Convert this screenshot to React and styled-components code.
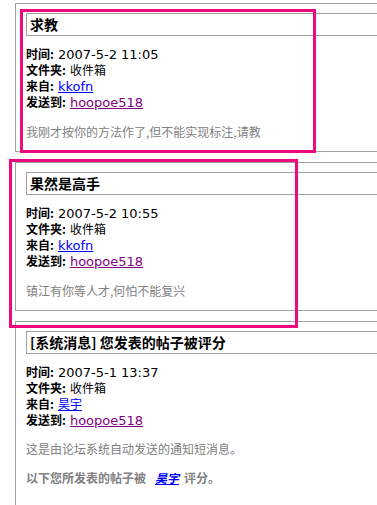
import React from 'react'
import styled, { createGlobalStyle } from 'styled-components'

const GlobalStyle = createGlobalStyle`
    html, body {
        margin: 0;
        padding: 0;
        background: #fff;
        overflow: hidden;
    }
    body {
        font-family: "DejaVu Sans", "Noto Sans CJK SC", sans-serif;
        font-size: 13px;
        color: #000;
    }
`

const Page = styled.div`
    position: relative;
    width: 377px;
    height: 505px;
    overflow: hidden;
    padding: 3px 0 0 15px;
    box-sizing: border-box;
`

const MessageBox = styled.div`
    width: 520px;
    border: 1px solid #a0a0a0;
    padding: 9px 10px ${p => p.bottom || 11}px 10px;
    margin-bottom: 10px;
`

const Title = styled.div`
    height: 21px;
    line-height: 21px;
    border: 1px solid #a0a0a0;
    padding-left: 3px;
    font-family: "Noto Sans CJK SC", "DejaVu Sans", sans-serif;
    font-weight: bold;
    font-size: 14px;
    white-space: nowrap;
`

const Info = styled.div`
    margin-top: 10px;
`

const Row = styled.div`
    height: 16px;
    line-height: 16px;
    white-space: nowrap;
`

const Label = styled.b`
    font-family: "Noto Sans CJK SC", sans-serif;
    font-size: 12px;
    font-weight: bold;
    margin-right: 4px;
`

const Value = styled.span`
    font-family: ${p => (p.cjk ? '"Noto Sans CJK SC", sans-serif' : '"DejaVu Sans", sans-serif')};
    font-size: ${p => (p.cjk ? 12 : 13)}px;
`

const UserLink = styled.a`
    font-family: "DejaVu Sans", "Noto Sans CJK SC", sans-serif;
    font-size: ${p => (p.cjk ? 12 : 13)}px;
    color: ${p => (p.visited ? '#800080' : '#0000ff')};
    text-decoration: underline;
`

const Body = styled.div`
    margin-top: ${p => p.gap || 14}px;
    height: 16px;
    line-height: 16px;
    font-family: "Noto Sans CJK SC", sans-serif;
    font-size: 12px;
    color: #808080;
    white-space: nowrap;
    font-weight: ${p => (p.bold ? 'bold' : 'normal')};
`

const RaterLink = styled.a`
    color: #0000ff;
    font-style: italic;
    text-decoration: underline;
    margin: 0 5px 0 9px;
`

const Highlight = styled.div`
    position: absolute;
    border: 3px solid #ee0a7e;
    box-sizing: border-box;
    pointer-events: none;
`

const messages = [
    {
        title: '求教',
        time: '2007-5-2 11:05',
        from: 'kkofn',
        text: '我刚才按你的方法作了,但不能实现标注,请教',
    },
    {
        title: '果然是高手',
        time: '2007-5-2 10:55',
        from: 'kkofn',
        text: '镇江有你等人才,何怕不能复兴',
    },
]

function Meta({ time, from, cjkFrom }) {
    return (
        <Info>
            <Row>
                <Label>时间:</Label>
                <Value>{time}</Value>
            </Row>
            <Row>
                <Label>文件夹:</Label>
                <Value cjk>收件箱</Value>
            </Row>
            <Row>
                <Label>来自:</Label>
                <UserLink href="#" cjk={cjkFrom}>{from}</UserLink>
            </Row>
            <Row>
                <Label>发送到:</Label>
                <UserLink href="#" visited>hoopoe518</UserLink>
            </Row>
        </Info>
    )
}

export default function App() {
    return (
        <Page>
            <GlobalStyle />
            {messages.map(m => (
                <MessageBox key={m.title}>
                    <Title>{m.title}</Title>
                    <Meta time={m.time} from={m.from} />
                    <Body>{m.text}</Body>
                </MessageBox>
            ))}
            <MessageBox bottom={20}>
                <Title>[系统消息] 您发表的帖子被评分</Title>
                <Meta time="2007-5-1 13:37" from="昊宇" cjkFrom />
                <Body gap={13}>这是由论坛系统自动发送的通知短消息。</Body>
                <Body gap={13} bold>
                    以下您所发表的帖子被<RaterLink href="#">昊宇</RaterLink>评分。
                </Body>
            </MessageBox>
            <Highlight style={{ left: 20, top: 9, width: 296, height: 144 }} />
            <Highlight style={{ left: 9, top: 159, width: 289, height: 169 }} />
        </Page>
    )
}
